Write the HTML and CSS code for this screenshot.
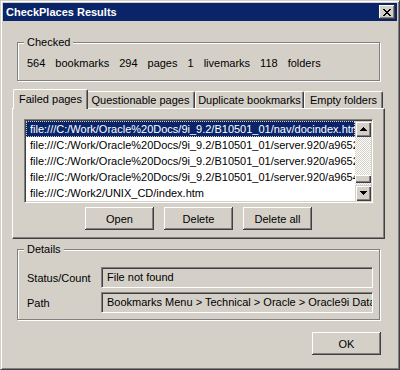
FILE: index.html
```html
<!DOCTYPE html>
<html>
<head>
  <title>CheckPlaces Results</title>
  <link rel="stylesheet" href="styles.css">
</head>
<body>
  <div class="window">
    <div class="titlebar">
      <span class="title">CheckPlaces Results</span>
      <span class="close-btn">
        <svg width="8" height="7" viewBox="0 0 8 7" shape-rendering="crispEdges"><path d="M0 0h2v1H0z M6 0h2v1H6z M1 1h2v1H1z M5 1h2v1H5z M2 2h4v1H2z M3 3h2v1H3z M2 4h4v1H2z M1 5h2v1H1z M5 5h2v1H5z M0 6h2v1H0z M6 6h2v1H6z" fill="#000"/></svg>
      </span>
    </div>

    <div class="content">
      <div class="group checked">
        <div class="group-title">Checked</div>
        <div class="stats">
          <span>564</span><span>bookmarks</span>
          <span>294</span><span>pages</span>
          <span>1</span><span>livemarks</span>
          <span>118</span><span>folders</span>
        </div>
      </div>

      <div class="tabs">
        <div class="tab active tab-failed">Failed pages</div>
        <div class="tab tab-questionable">Questionable pages</div>
        <div class="tab tab-duplicate">Duplicate bookmarks</div>
        <div class="tab tab-empty">Empty folders</div>
      </div>

      <div class="panel">
        <div class="listbox">
          <div class="list-items">
            <div class="row selected">file:///C:/Work/Oracle%20Docs/9i_9.2/B10501_01/nav/docindex.htm</div>
            <div class="row">file:///C:/Work/Oracle%20Docs/9i_9.2/B10501_01/server.920/a96524/toc.htm</div>
            <div class="row">file:///C:/Work/Oracle%20Docs/9i_9.2/B10501_01/server.920/a96521/toc.htm</div>
            <div class="row">file:///C:/Work/Oracle%20Docs/9i_9.2/B10501_01/server.920/a96540/toc.htm</div>
            <div class="row">file:///C:/Work2/UNIX_CD/index.htm</div>
          </div>
          <div class="scrollbar">
            <div class="sb-btn">
              <svg width="7" height="4" viewBox="0 0 7 4" shape-rendering="crispEdges"><path d="M3 0h1v1H3z M2 1h3v1H2z M1 2h5v1H1z M0 3h7v1H0z" fill="#000"/></svg>
            </div>
            <div class="sb-track"><div class="sb-thumb"></div></div>
            <div class="sb-btn">
              <svg width="7" height="4" viewBox="0 0 7 4" shape-rendering="crispEdges"><path d="M0 0h7v1H0z M1 1h5v1H1z M2 2h3v1H2z M3 3h1v1H3z" fill="#000"/></svg>
            </div>
          </div>
        </div>
        <div class="btn-row">
          <button class="btn">Open</button>
          <button class="btn">Delete</button>
          <button class="btn">Delete all</button>
        </div>
      </div>

      <div class="group details">
        <div class="group-title">Details</div>
        <div class="field-row first">
          <span class="field-label">Status/Count</span>
          <div class="field">File not found</div>
        </div>
        <div class="field-row">
          <span class="field-label">Path</span>
          <div class="field">Bookmarks Menu &gt; Technical &gt; Oracle &gt; Oracle9i Database Documentation</div>
        </div>
      </div>

      <div class="footer">
        <button class="btn">OK</button>
      </div>
    </div>
  </div>
</body>
</html>
```

FILE: styles.css
```css
body {
  margin: 0;
  background-color: #d4d0c8;
  font-family: "Liberation Sans", Arial, sans-serif;
  font-size: 11px;
  color: #000;
}
.window {
  width: 400px;
  height: 370px;
  box-sizing: border-box;
  border: 1px solid;
  border-color: #d4d0c8 #404040 #404040 #d4d0c8;
  box-shadow: inset 1px 1px #fff, inset -1px -1px #808080;
  padding: 2px;
}
.titlebar {
  height: 18px;
  background-color: #0a246a;
  color: #fff;
  font-weight: bold;
  display: flex;
  align-items: center;
  justify-content: space-between;
  padding: 0 2px 0 3px;
}
.close-btn {
  width: 16px;
  height: 14px;
  background-color: #d4d0c8;
  box-shadow: inset -1px -1px #404040, inset 1px 1px #fff, inset -2px -2px #808080;
  display: flex;
  align-items: center;
  justify-content: center;
}
.content {
  display: flex;
  flex-direction: column;
  padding: 0 12px 0 9px;
}

/* group boxes */
.group {
  margin: 0 5px;
  border: 1px solid #808080;
  box-shadow: 1px 1px #fff, inset 1px 1px #fff;
}
.group-title {
  width: fit-content;
  margin: -7px 0 0 -3px;
  padding: 0 3px;
  line-height: 13px;
  background-color: #d4d0c8;
}
.checked {
  margin-top: 21px;
  padding: 0 9px 10px;
}
.stats {
  display: flex;
  gap: 10px;
  margin-top: 8px;
  line-height: 13px;
}

/* tabs */
.tabs {
  display: flex;
  align-items: flex-end;
  margin-top: 8px;
  padding-left: 3px;
}
.tab {
  height: 17px;
  box-sizing: border-box;
  border-top: 1px solid #fff;
  border-left: 1px solid #fff;
  border-right: 1px solid #404040;
  border-radius: 2px 2px 0 0;
  box-shadow: inset -1px 0 #808080;
  background-color: #d4d0c8;
  display: flex;
  align-items: center;
  justify-content: center;
  white-space: nowrap;
}
.tab.active {
  height: 20px;
  margin: 0 -2px -1px;
  padding-bottom: 2px;
  position: relative;
  z-index: 1;
}
.tab-failed { width: 75px; }
.tab-questionable { width: 109px; }
.tab-duplicate { width: 109px; }
.tab-empty { width: 79px; }

.panel {
  border: 1px solid;
  border-color: #fff #404040 #404040 #fff;
  box-shadow: inset -1px -1px #808080;
  padding: 10px 11px 8px;
}

/* list */
.listbox {
  display: flex;
  height: 84px;
  box-sizing: border-box;
  border: 1px solid;
  border-color: #808080 #fff #fff #808080;
  box-shadow: inset 1px 1px #404040, inset -1px -1px #d4d0c8;
  padding: 1px;
  background-color: #fff;
}
.list-items {
  flex: 1;
  min-width: 0;
  overflow: hidden;
}
.row {
  height: 16px;
  line-height: 16px;
  padding-left: 4px;
  white-space: nowrap;
  overflow: hidden;
}
.row.selected {
  background-color: #0a246a;
  color: #fff;
  outline: 1px dotted #d4d0c8;
  outline-offset: -1px;
}
.scrollbar {
  width: 16px;
  display: flex;
  flex-direction: column;
}
.sb-btn {
  height: 16px;
  background-color: #d4d0c8;
  box-shadow: inset 1px 1px #d4d0c8, inset 2px 2px #fff, inset -1px -1px #404040, inset -2px -2px #808080;
  display: flex;
  align-items: center;
  justify-content: center;
}
.sb-track {
  flex: 1;
  display: flex;
  flex-direction: column;
  justify-content: flex-end;
  padding-bottom: 2px;
  background: repeating-conic-gradient(#fff 0 25%, #d4d0c8 0 50%) 0 0 / 2px 2px;
}
.sb-thumb {
  height: 8px;
  background-color: #d4d0c8;
  box-shadow: inset 1px 1px #fff, inset -1px -1px #404040, inset -2px -2px #808080;
}

/* buttons */
.btn-row {
  display: flex;
  justify-content: center;
  gap: 10px;
  margin-top: 4px;
}
.btn {
  width: 69px;
  height: 23px;
  padding: 0;
  border: none;
  background-color: #d4d0c8;
  font: inherit;
  color: #000;
  box-shadow: inset -1px -1px #404040, inset 1px 1px #fff, inset -2px -2px #808080;
}

/* details */
.details {
  margin-top: 10px;
  padding: 0 6px 6px 9px;
}
.field-row {
  display: flex;
  align-items: center;
  height: 21px;
  margin-top: 4px;
}
.field-row.first {
  margin-top: 11px;
}
.field-label {
  width: 74px;
}
.field {
  flex: 1;
  min-width: 0;
  height: 21px;
  box-sizing: border-box;
  border: 1px solid;
  border-color: #808080 #fff #fff #808080;
  box-shadow: inset 1px 1px #404040, inset -1px -1px #d4d0c8;
  padding: 0 5px;
  line-height: 19px;
  white-space: nowrap;
  overflow: hidden;
}

.footer {
  display: flex;
  justify-content: flex-end;
  margin-top: 12px;
  padding-right: 4px;
}
```
